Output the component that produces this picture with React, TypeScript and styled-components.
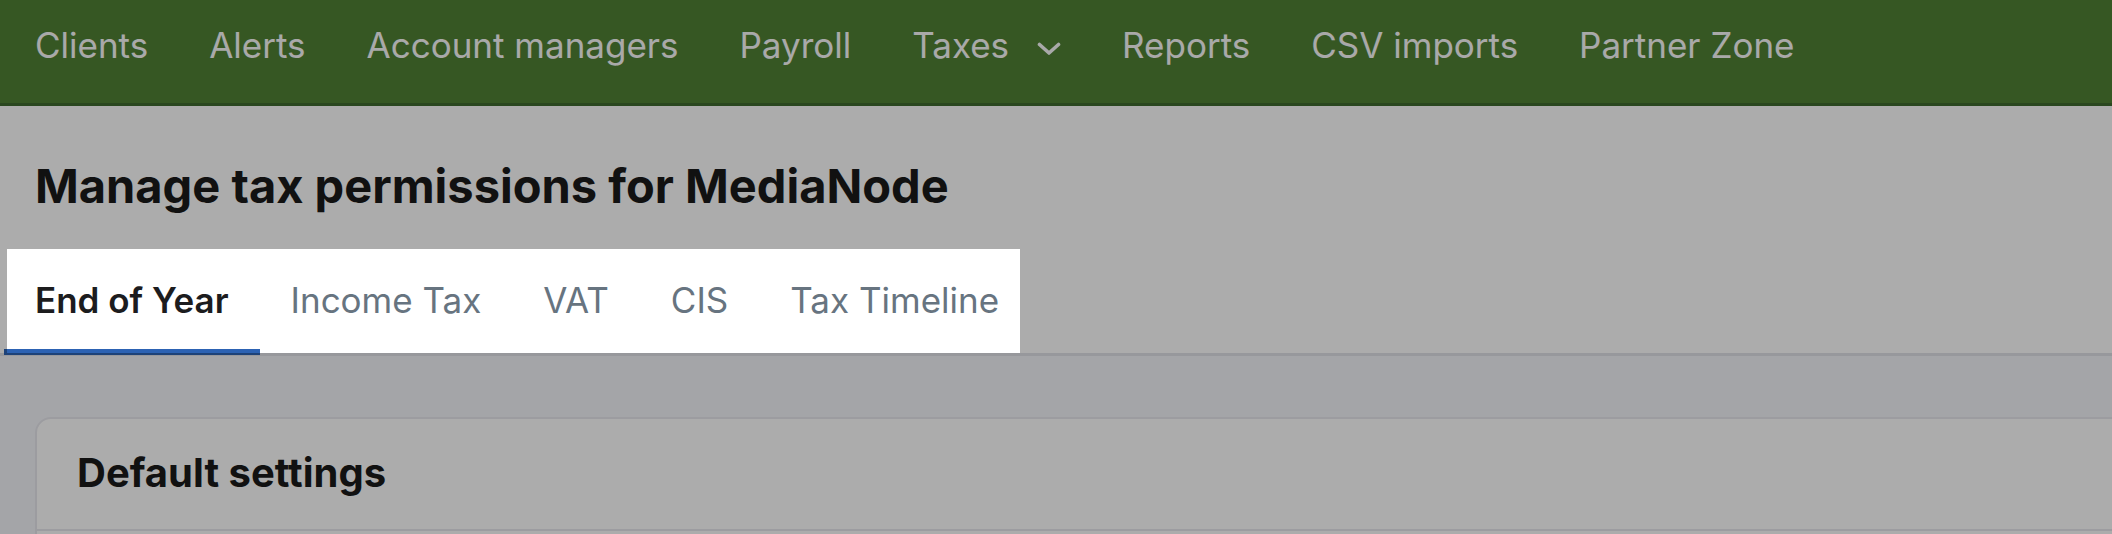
import React from 'react';
import styled, { createGlobalStyle } from 'styled-components';

const GlobalStyle = createGlobalStyle`
  html, body {
    margin: 0;
    padding: 0;
    overflow: hidden;
    background: #f4f5fa;
    font-family: Inter, 'Noto Sans', 'Liberation Sans', sans-serif;
  }
`;

const Page = styled.div`
  min-height: 534px;
  background: #f4f5fa;
`;

const TopNav = styled.nav`
  display: flex;
  align-items: flex-start;
  gap: 61px;
  height: 106px;
  padding: 25px 0 0 35px;
  box-sizing: border-box;
  background: #508235;
  border-bottom: 3px solid #3f6a2e;
`;

const NavItem = styled.a`
  display: flex;
  align-items: center;
  gap: 28px;
  height: 41px;
  font-size: 35px;
  font-weight: 400;
  line-height: 41px;
  color: #fbfbfb;
  white-space: nowrap;
  cursor: pointer;

  svg {
    margin-top: 6px;
  }
`;

const Header = styled.header`
  background: #ffffff;
`;

const Title = styled.h1`
  margin: 0;
  padding: 51px 0 34px 35px;
  font-size: 47px;
  line-height: 58px;
  font-weight: 700;
  color: #1a1a1a;
`;

const TabBar = styled.div`
  border-bottom: 3px solid #e0e1e7;
  padding-left: 4px;
`;

const TabList = styled.div`
  position: relative;
  display: inline-flex;
`;

// tour highlight: dims everything except the tab strip
const Spotlight = styled.div`
  position: absolute;
  top: 0;
  bottom: 0;
  left: 3px;
  right: 10px;
  z-index: 10;
  pointer-events: none;
  box-shadow: 0 0 0 4000px rgba(0, 0, 0, 0.325);
`;

const Tab = styled.button<{ $active?: boolean }>`
  position: relative;
  padding: 31px 31px 32px;
  border: none;
  background: transparent;
  font-family: inherit;
  font-size: 35px;
  line-height: 41px;
  font-weight: ${p => (p.$active ? 600 : 400)};
  color: ${p => (p.$active ? '#1c1c1e' : '#677480')};
  white-space: nowrap;
  cursor: pointer;

  &::after {
    content: '';
    display: ${p => (p.$active ? 'block' : 'none')};
    position: absolute;
    left: 0;
    right: 0;
    bottom: -2px;
    height: 6px;
    background: #2c62b3;
  }
`;

const Body = styled.main`
  padding: 61px 0 0 35px;
`;

const Card = styled.section`
  margin-right: -40px;
  background: #ffffff;
  border: 2px solid #e7e8ee;
  border-radius: 16px;
  min-height: 200px;
`;

const CardHeader = styled.div`
  padding: 30px 40px 32px;
  border-bottom: 2px solid #e7e8ee;
`;

const CardTitle = styled.h2`
  margin: 0;
  font-size: 40px;
  line-height: 48px;
  font-weight: 700;
  color: #1a1a1a;
`;

const Chevron = () => (
  <svg width="24" height="14" viewBox="0 0 24 14" fill="none">
    <polyline
      points="2.5,2.5 12,11 21.5,2.5"
      stroke="currentColor"
      strokeWidth="3.6"
      strokeLinecap="round"
      strokeLinejoin="round"
    />
  </svg>
);

const navLinks = ['Clients', 'Alerts', 'Account managers', 'Payroll', 'Taxes', 'Reports', 'CSV imports', 'Partner Zone'];
const tabs = ['End of Year', 'Income Tax', 'VAT', 'CIS', 'Tax Timeline'];

const App: React.FC = () => (
  <Page>
    <GlobalStyle />
    <TopNav>
      {navLinks.map(link => (
        <NavItem key={link}>
          {link}
          {link === 'Taxes' && <Chevron />}
        </NavItem>
      ))}
    </TopNav>

    <Header>
      <Title>Manage tax permissions for MediaNode</Title>
      <TabBar>
        <TabList>
          <Spotlight />
          {tabs.map((tab, i) => (
            <Tab key={tab} $active={i === 0}>
              {tab}
            </Tab>
          ))}
        </TabList>
      </TabBar>
    </Header>

    <Body>
      <Card>
        <CardHeader>
          <CardTitle>Default settings</CardTitle>
        </CardHeader>
      </Card>
    </Body>
  </Page>
);

export default App;
